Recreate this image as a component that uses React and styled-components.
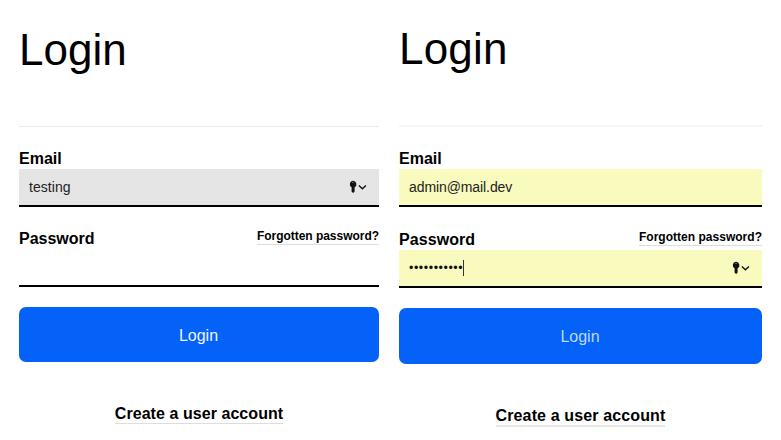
import React from 'react'
import styled , { createGlobalStyle } from "styled-components";


const forms = [
     {
          id : 'plain' , email : 'testing' , password : '' , keyOn : 'email' ,
     } ,
     {
          id : 'autofill' , email : 'admin@mail.dev' , password : '•••••••••••' , keyOn : 'password' , filled : true ,
     } ,
]

function KeyMenu() {
     return (
               <KeyIcon viewBox="0 0 18 14">
                    <path
                         fillRule="evenodd"
                         d="M4 .8a3.4 3.4 0 0 1 1.6 6.4v4.4L4.2 13 2.6 11.8V7.2A3.4 3.4 0 0 1 4 .8zM4 2a.5.5 0 1 0 0 1 .5.5 0 0 0 0-1z"
                    />
                    <path d="M9.9 5.6l3.5 3.1 3.5-3.1" fill="none" stroke="currentColor" strokeWidth="1.4" />
               </KeyIcon>
     )
}

function LoginForm( { email , password , keyOn , filled } ) {
     return (
               <Form $filled={ filled }>
                    <Title $filled={ filled }>Login</Title>
                    <Divider $filled={ filled } />
                    <Label>Email</Label>
                    <Field $color={ filled ? '#f9fabd' : '#e5e5e5' }>
                         <Value $filled={ filled }>{ email }</Value>
                         { keyOn === 'email' && <KeyMenu /> }
                    </Field>
                    <LabelRow $filled={ filled }>
                         <Label $filled={ filled }>Password</Label>
                         <Forgotten $filled={ filled }>Forgotten password?</Forgotten>
                    </LabelRow>
                    <Field $color={ filled ? '#f9fabd' : '#fff' }>
                         <Dots>{ password }</Dots>
                         { filled && <Caret /> }
                         { keyOn === 'password' && <KeyMenu /> }
                    </Field>
                    <Button $filled={ filled }>Login</Button>
                    <Create $filled={ filled }>Create a user account</Create>
               </Form>
     );
}

function App() {
     return (
               <Page>
                    <GlobalStyle />
                    { forms.map( ( form ) => <LoginForm key={ form.id } { ...form } /> ) }
               </Page>
     );
}

export default App;

const GlobalStyle = createGlobalStyle`
     * {
          box-sizing : border-box;
          }
     body {
          margin      : 0;
          background  : #fff;
          color       : #000;
          font-family : "Liberation Sans", Arial, sans-serif;
          }
`
const Page = styled.main`
     display               : grid;
     grid-template-columns : 360px 363px;
     column-gap            : 20px;
     height                : 440px;
     padding-left          : 19px;
     overflow              : hidden;
`
const Form = styled.section`
     display        : flex;
     flex-direction : column;
     padding-top    : ${ p => p.$filled ? 24 : 25 }px;
`
const Title = styled.h1`
     height         : 101px;
     margin         : 0;
     font-size      : 44px;
     font-weight    : 400;
     line-height    : 50px;
     letter-spacing : ${ p => p.$filled ? .2 : 0 }px;
`
const Divider = styled.div`
     height        : ${ p => p.$filled ? 2 : 1 }px;
     margin-bottom : 22px;
     background    : ${ p => p.$filled ? '#f5f5f5' : '#ebebeb' };
`
const Label = styled.span`
     height         : 20px;
     font-size      : 16px;
     font-weight    : 700;
     line-height    : 19px;
     letter-spacing : ${ p => p.$filled ? .07 : 0 }px;
`
const Field = styled.div`
     display       : flex;
     align-items   : center;
     height        : 38px;
     padding       : 0 10px;
     background    : ${ p => p.$color };
     border-bottom : 2px solid #000;
`
const Value = styled.span`
     color          : #222;
     font-size      : 14px;
     line-height    : 20px;
     letter-spacing : ${ p => p.$filled ? '-.09px' : '.05px' };
`
const Dots = styled.span`
     color          : #111;
     font-size      : 12.5px;
     line-height    : 20px;
     letter-spacing : .55px;
`
const Caret = styled.span`
     width      : 1px;
     height     : 16px;
     background : #333;
`
const KeyIcon = styled.svg`
     width        : 18px;
     height       : 14px;
     margin-left  : auto;
     margin-right : 2px;
     fill         : currentColor;
     color        : #111;
`
const LabelRow = styled.div`
     display         : flex;
     justify-content : space-between;
     height          : ${ p => p.$filled ? 43 : 42 }px;
     padding-top     : ${ p => p.$filled ? 23 : 22 }px;
`
const Forgotten = styled.a`
     height         : 16px;
     border-bottom  : 1px solid #ddd;
     font-size      : 12px;
     font-weight    : 700;
     line-height    : 14px;
     letter-spacing : ${ p => p.$filled ? '.02px' : '-.03px' };
`
const Button = styled.button`
     height        : ${ p => p.$filled ? 56 : 55 }px;
     margin-top    : 20px;
     padding       : ${ p => p.$filled ? 2 : 3 }px 1px 0 0;
     border        : 0;
     border-radius : 7px;
     background    : #0462f8;
     color         : ${ p => p.$filled ? '#bdd6fb' : '#f0f5ff' };
     font-family   : inherit;
     font-size     : 16px;
`
const Create = styled.a`
     align-self     : center;
     height         : ${ p => p.$filled ? 22 : 20 }px;
     margin-top     : ${ p => p.$filled ? 41 : 42 }px;
     border-bottom  : ${ p => p.$filled ? '2px solid #e6e6e6' : '1px solid #ddd' };
     font-size      : 16px;
     font-weight    : 700;
     line-height    : ${ p => p.$filled ? 22 : 20 }px;
     letter-spacing : ${ p => p.$filled ? .13 : .06 }px;
`
